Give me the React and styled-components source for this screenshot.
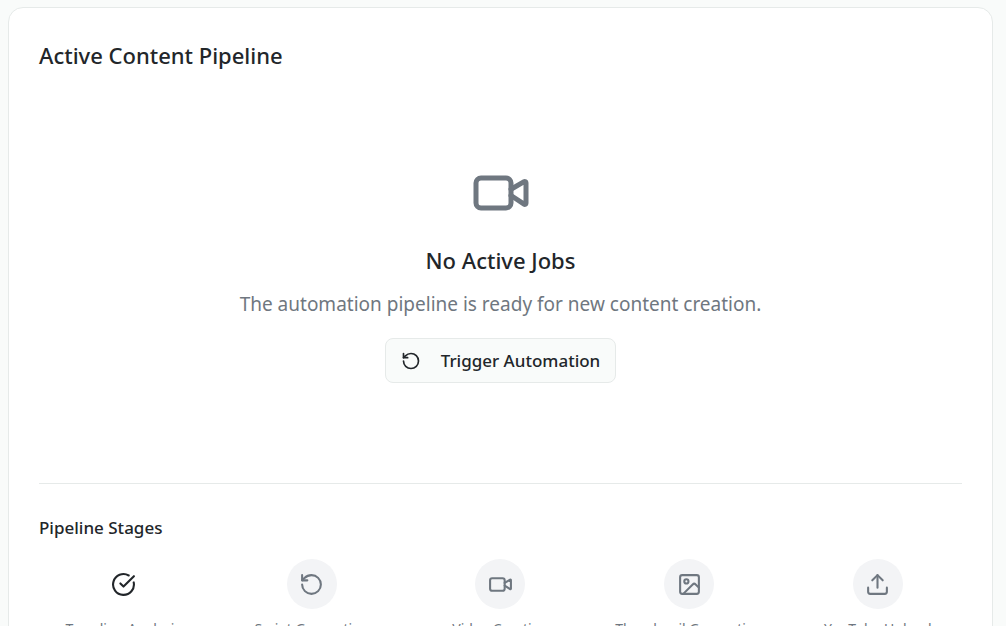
import React from "react";
import styled, { createGlobalStyle } from "styled-components";

const GlobalStyle = createGlobalStyle`
  *, *::before, *::after { box-sizing: border-box; }
  body {
    margin: 0;
    background: #f9fbfa;
    color: #22262a;
    font-family: "Segoe UI", "Noto Sans", "Open Sans", sans-serif;
  }
  h2, h3, h4, p, ul { margin: 0; padding: 0; }
`;

const Page = styled.main`
  height: 100vh;
  overflow: hidden;
  padding: 7px 13px 0 8px;
`;

const Card = styled.section`
  background: #fff;
  border: 1px solid #e6eae9;
  border-radius: 15px;
  padding: 30px;
`;

const CardTitle = styled.h2`
  font-size: 22px;
  line-height: 34px;
  font-weight: 500;
`;

const EmptyState = styled.div`
  display: flex;
  flex-direction: column;
  align-items: center;
  padding: 91px 0 100px;
  text-align: center;
`;

const EmptyTitle = styled.h3`
  margin-top: 20px;
  font-size: 22px;
  line-height: 34px;
  font-weight: 500;
`;

const EmptyText = styled.p`
  margin: 12px 0 18px;
  font-size: 19px;
  line-height: 31px;
  color: #6f7780;
`;

const TriggerButton = styled.button`
  display: inline-flex;
  align-items: center;
  gap: 20px;
  height: 45px;
  padding: 0 15px;
  border: 1px solid #e6eae9;
  border-radius: 8px;
  background: #f9fbfa;
  color: inherit;
  font: inherit;
  font-size: 17px;
  font-weight: 500;
  cursor: pointer;
`;

const Stages = styled.section`
  border-top: 1px solid #e6eae9;
  padding-top: 30px;
`;

const StagesTitle = styled.h4`
  font-size: 17px;
  line-height: 27px;
  font-weight: 500;
`;

const StageGrid = styled.ul`
  display: grid;
  grid-template-columns: repeat(5, minmax(0, 1fr));
  gap: 20px;
  margin-top: 18px;
  list-style: none;
`;

const Stage = styled.li`
  display: flex;
  flex-direction: column;
  align-items: center;
  gap: 10px;
  font-size: 14px;
  line-height: 20px;
  color: #6f7780;
  text-align: center;
`;

const StageBadge = styled.span`
  display: flex;
  align-items: center;
  justify-content: center;
  width: 50px;
  height: 50px;
  border-radius: 50%;
  background: ${(p) => (p.$done ? "transparent" : "#f3f4f6")};
  color: ${(p) => (p.$done ? "#22262a" : "#6f7780")};
`;

const Svg = styled.svg`
  display: block;
  flex: none;
  width: ${(p) => p.$size}px;
  height: ${(p) => p.$size}px;
  color: ${(p) => (p.$muted ? "#6f7780" : "inherit")};
  fill: none;
  stroke: currentColor;
  stroke-width: 2;
  stroke-linecap: round;
  stroke-linejoin: round;
`;

const shapes = {
  video: (
    <>
      <path d="m16 13 5.223 3.482a.5.5 0 0 0 .777-.416V7.87a.5.5 0 0 0-.752-.432L16 10.5" />
      <rect x="2" y="6" width="14" height="12" rx="2" />
    </>
  ),
  rotate: (
    <>
      <path d="M3 12a9 9 0 1 0 9-9 9.75 9.75 0 0 0-6.74 2.74L3 8" />
      <path d="M3 3v5h5" />
    </>
  ),
  check: (
    <>
      <path d="M21.801 10A10 10 0 1 1 17 3.335" />
      <path d="m9 11 3 3L22 4" />
    </>
  ),
  image: (
    <>
      <rect x="3" y="3" width="18" height="18" rx="2" />
      <circle cx="9" cy="9" r="2" />
      <path d="m21 15-3.086-3.086a2 2 0 0 0-2.828 0L6 21" />
    </>
  ),
  upload: (
    <>
      <path d="M21 15v4a2 2 0 0 1-2 2H5a2 2 0 0 1-2-2v-4" />
      <path d="m17 8-5-5-5 5" />
      <path d="M12 3v12" />
    </>
  ),
};

function Icon({ name, size, muted }) {
  return (
    <Svg viewBox="0 0 24 24" aria-hidden="true" $size={size} $muted={muted}>
      {shapes[name]}
    </Svg>
  );
}

const stages = [
  { label: "Trending Analysis", icon: "check", done: true },
  { label: "Script Generation", icon: "rotate" },
  { label: "Video Creation", icon: "video" },
  { label: "Thumbnail Generation", icon: "image" },
  { label: "YouTube Upload", icon: "upload" },
];

export default function App() {
  return (
    <>
      <GlobalStyle />
      <Page>
        <Card>
          <CardTitle>Active Content Pipeline</CardTitle>
          <EmptyState>
            <Icon name="video" size={60} muted />
            <EmptyTitle>No Active Jobs</EmptyTitle>
            <EmptyText>The automation pipeline is ready for new content creation.</EmptyText>
            <TriggerButton type="button">
              <Icon name="rotate" size={20} />
              Trigger Automation
            </TriggerButton>
          </EmptyState>
          <Stages>
            <StagesTitle>Pipeline Stages</StagesTitle>
            <StageGrid>
              {stages.map((s) => (
                <Stage key={s.label}>
                  <StageBadge $done={s.done}>
                    <Icon name={s.icon} size={25} />
                  </StageBadge>
                  {s.label}
                </Stage>
              ))}
            </StageGrid>
          </Stages>
        </Card>
      </Page>
    </>
  );
}
